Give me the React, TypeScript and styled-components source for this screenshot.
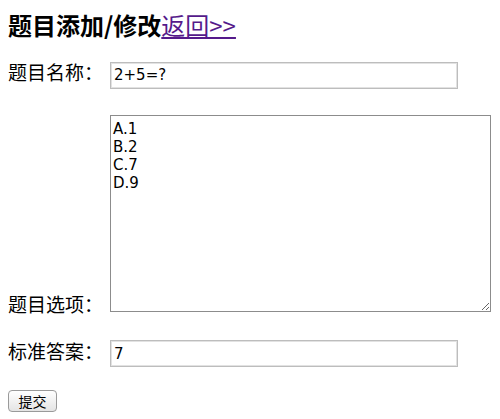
import React from 'react';
import styled, { createGlobalStyle } from 'styled-components';

const GlobalStyle = createGlobalStyle`
  body {
    margin: 0;
    background: #fff;
    color: #000;
    font-family: "Noto Sans CJK SC", "DejaVu Sans", sans-serif;
  }
`;

const Page = styled.div`
  padding: 8px;
`;

const Title = styled.h2`
  margin: 3px 0 0;
  font-size: 24px;
  line-height: 28px;
  font-weight: bold;
`;

const BackLink = styled.a`
  color: #551a8b;
  font-weight: normal;
  text-decoration: underline;
`;

const Form = styled.form`
  display: flex;
  flex-direction: column;
  align-items: flex-start;
`;

const Row = styled.div<{ $top: number }>`
  margin-top: ${p => p.$top}px;
  line-height: 24px;
`;

const Label = styled.label`
  display: inline-block;
  width: 102px;
  font-size: 19px;
`;

const TextInput = styled.input`
  box-sizing: border-box;
  width: 348px;
  height: 27px;
  padding: 0 3px;
  border: 1px solid #bdbdbd;
  box-shadow: inset 0 0 0 1px #e2e2e2;
  font-family: "DejaVu Sans", sans-serif;
  font-size: 15px;
  color: #000;
  vertical-align: baseline;
`;

const Options = styled.textarea`
  box-sizing: border-box;
  width: 381px;
  height: 197px;
  padding: 4px 2px;
  border: 1px solid #8c8c8c;
  font-family: "DejaVu Sans", sans-serif;
  font-size: 15px;
  line-height: 18px;
  color: #000;
  vertical-align: baseline;
`;

const Submit = styled.button`
  box-sizing: border-box;
  width: 49px;
  height: 22px;
  padding: 0;
  border: 1px solid #9a9a9a;
  border-radius: 4px;
  background: linear-gradient(#ffffff, #e4e4e4);
  font-family: "Noto Sans CJK SC", sans-serif;
  font-size: 14px;
  line-height: 20px;
  color: #000;
`;

export default function App() {
  return (
    <Page>
      <GlobalStyle />
      <Title>
        题目添加/修改<BackLink href="#">返回&gt;&gt;</BackLink>
      </Title>
      <Form onSubmit={e => e.preventDefault()}>
        <Row $top={21}>
          <Label>题目名称：</Label>
          <TextInput type="text" defaultValue="2+5=?" />
        </Row>
        <Row $top={26}>
          <Label>题目选项：</Label>
          <Options defaultValue={'A.1\nB.2\nC.7\nD.9'} />
        </Row>
        <Row $top={22}>
          <Label>标准答案：</Label>
          <TextInput type="text" defaultValue="7" />
        </Row>
        <Row $top={21}>
          <Submit type="submit">提交</Submit>
        </Row>
      </Form>
    </Page>
  );
}
